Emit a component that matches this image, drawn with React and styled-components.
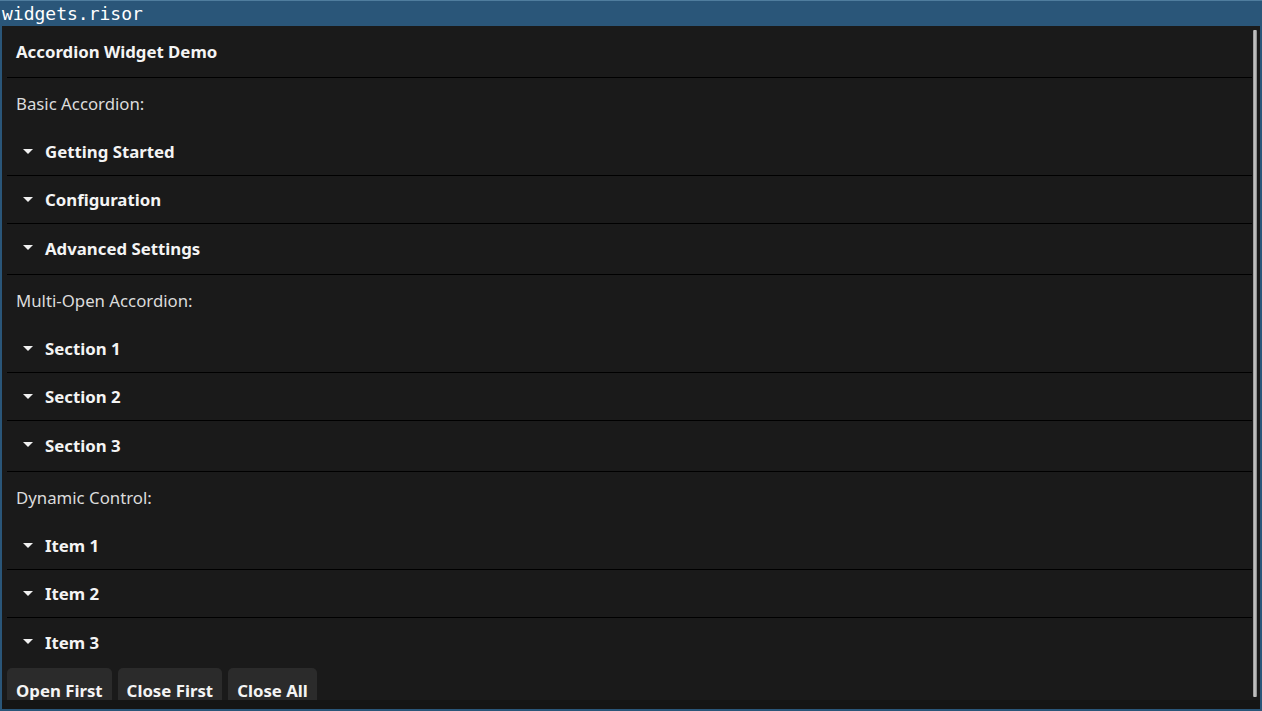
import React from "react";
import styled, { createGlobalStyle } from "styled-components";

const GlobalStyle = createGlobalStyle`
  html, body {
    margin: 0;
    padding: 0;
    background: #2a5679;
    overflow: hidden;
  }
  * {
    box-sizing: border-box;
  }
`;

const Window = styled.div`
  width: 1262px;
  height: 711px;
  display: flex;
  flex-direction: column;
  background: #2a5679;
  border-top: 1px solid #4f7d9e;
`;

const TitleBar = styled.div`
  height: 25px;
  flex: none;
  padding-left: 2px;
  display: flex;
  align-items: center;
  font-family: "DejaVu Sans Mono", monospace;
  font-size: 18px;
  color: #ffffff;
  background: #2a5679;
`;

const Body = styled.div`
  flex: 1;
  margin: 0 2px 2px 2px;
  display: flex;
  flex-direction: column;
  background: #1a1a1a;
  min-height: 0;
`;

const Viewport = styled.div`
  flex: 1;
  display: flex;
  min-height: 0;
`;

const Content = styled.div`
  flex: 1;
  padding-left: 5px;
  overflow: hidden;
  font-family: "Noto Sans", "Open Sans", sans-serif;
  font-size: 16.8px;
  color: #e8e8e8;
`;

const Track = styled.div`
  width: 8px;
  flex: none;
  padding: 4px 3px 3px 1px;
  display: flex;
`;

const Thumb = styled.div`
  flex: 1;
  border-radius: 1px;
  background: linear-gradient(90deg, #8e8e8e, #c4c4c4 40%, #b4b4b4 70%, #7a7a7a);
`;

const BottomStrip = styled.div`
  height: 9px;
  flex: none;
  background: #151515;
`;

const Header = styled.div`
  height: 52px;
  padding-left: 9px;
  display: flex;
  align-items: center;
  font-weight: 700;
  color: #f4f4f4;
  border-bottom: 1px solid #000;
`;

const Label = styled.div`
  height: 50px;
  padding-left: 9px;
  display: flex;
  align-items: center;
  color: #dcdcdc;
`;

const Group = styled.div`
  padding-bottom: 2px;
  border-bottom: ${(p) => (p.$last ? "none" : "1px solid #000")};
`;

const Item = styled.div`
  height: 48px;
  display: flex;
  align-items: center;
  padding-left: 16px;
  gap: 12px;
  font-weight: 700;
  color: #f4f4f4;
  border-bottom: ${(p) => (p.$last ? "none" : "1px solid #000")};
`;

const Caret = styled.span`
  width: 0;
  height: 0;
  border-left: 5px solid transparent;
  border-right: 5px solid transparent;
  border-top: 5px solid #f0f0f0;
  margin-top: -1px;
`;

const Buttons = styled.div`
  display: flex;
  gap: 6px;
`;

const Button = styled.button`
  height: 44px;
  padding: 0 9px;
  border: none;
  border-radius: 5px;
  background: #2b2b2b;
  color: #f4f4f4;
  font-family: "Noto Sans", "Open Sans", sans-serif;
  font-size: 16.8px;
  font-weight: 700;
  display: flex;
  align-items: center;
  justify-content: center;
`;

const groups = [
  { label: "Basic Accordion:", items: ["Getting Started", "Configuration", "Advanced Settings"] },
  { label: "Multi-Open Accordion:", items: ["Section 1", "Section 2", "Section 3"] },
  { label: "Dynamic Control:", items: ["Item 1", "Item 2", "Item 3"] },
];

const App = () => {
  return (
    <Window>
      <GlobalStyle />
      <TitleBar>widgets.risor</TitleBar>
      <Body>
        <Viewport>
          <Content>
            <Header>Accordion Widget Demo</Header>
            {groups.map((g, gi) => (
              <React.Fragment key={g.label}>
                <Label>{g.label}</Label>
                <Group $last={gi === groups.length - 1}>
                  {g.items.map((name, i) => (
                    <Item key={name} $last={i === g.items.length - 1}>
                      <Caret />
                      {name}
                    </Item>
                  ))}
                </Group>
              </React.Fragment>
            ))}
            <Buttons>
              <Button>Open First</Button>
              <Button>Close First</Button>
              <Button>Close All</Button>
            </Buttons>
          </Content>
          <Track>
            <Thumb />
          </Track>
        </Viewport>
        <BottomStrip />
      </Body>
    </Window>
  );
};

export default App;
